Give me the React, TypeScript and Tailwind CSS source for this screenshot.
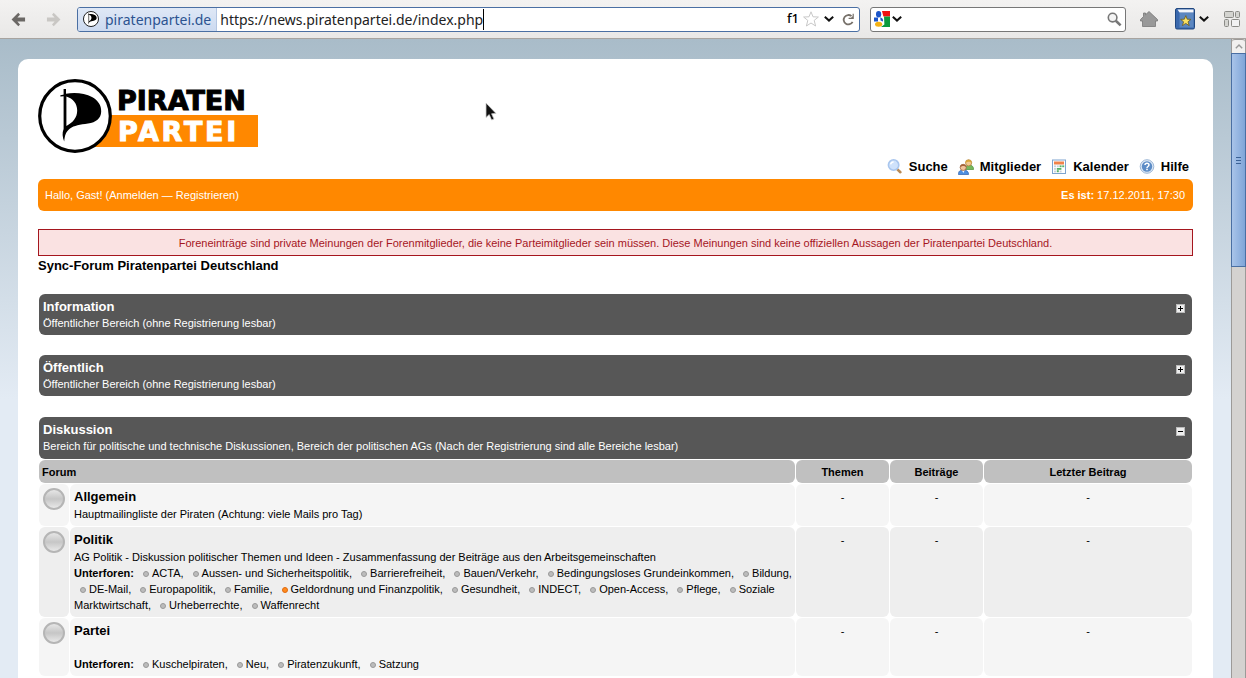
import React, { type ReactNode } from "react";

type Sub = { name: string; fresh?: boolean };
type Forum = { title: string; text: string; subs?: Sub[] };

const forums: Forum[] = [
  { title: "Allgemein", text: "Hauptmailingliste der Piraten (Achtung: viele Mails pro Tag)" },
  {
    title: "Politik",
    text: "AG Politik - Diskussion politischer Themen und Ideen - Zusammenfassung der Beiträge aus den Arbeitsgemeinschaften",
    subs: [
      { name: "ACTA" },
      { name: "Aussen- und Sicherheitspolitik" },
      { name: "Barrierefreiheit" },
      { name: "Bauen/Verkehr" },
      { name: "Bedingungsloses Grundeinkommen" },
      { name: "Bildung" },
      { name: "DE-Mail" },
      { name: "Europapolitik" },
      { name: "Familie" },
      { name: "Geldordnung und Finanzpolitik", fresh: true },
      { name: "Gesundheit" },
      { name: "INDECT" },
      { name: "Open-Access" },
      { name: "Pflege" },
      { name: "Soziale Marktwirtschaft" },
      { name: "Urheberrechte" },
      { name: "Waffenrecht" },
    ],
  },
  {
    title: "Partei",
    text: "\u00a0",
    subs: [{ name: "Kuschelpiraten" }, { name: "Neu" }, { name: "Piratenzukunft" }, { name: "Satzung" }],
  },
];

function Arrow({ className }: { className: string }) {
  return (
    <svg viewBox="0 0 16 16" className={className} aria-hidden="true">
      <path d="M7.8 .8 L.6 8 L7.8 15.2 L9.6 13.2 L6.8 10.2 H15 V5.8 H6.8 L9.6 2.8 Z" fill="currentColor" />
    </svg>
  );
}

function Chevron() {
  return (
    <svg viewBox="0 0 10 6" className="h-[6px] w-[10px]" aria-hidden="true">
      <path d="M.8 .8 L5 4.6 L9.2 .8" fill="none" stroke="#111" strokeWidth="2" />
    </svg>
  );
}

function PirateMark({ className, ring }: { className: string; ring: number }) {
  return (
    <svg viewBox="0 0 74 74" className={className} aria-hidden="true">
      <circle cx="37" cy="37" r={36.8 - ring / 2} fill="#fff" stroke="#000" strokeWidth={ring} />
      <FlagShape />
    </svg>
  );
}

function FlagShape() {
  return (
    <g>
      <path
        fillRule="evenodd"
        d="M25.6 10 H28 V14.8 C36 13.2 47 14 54 18 C60 21.5 63.4 26 63.2 32.5 C63 39.5 58 43.4 50 44.6 C42 45.8 36 46.6 32 49.5 C28 52.5 26.8 56 26.2 62.5 C24.4 58 24 54 25.6 50 Z M28.4 17.5 V47 C35 43.5 39.2 38.5 39.2 31.5 C39.2 24.5 35 19.5 28.4 17.5 Z"
      />
      <path d="M22.4 16.2 L29 15 V17 L22.4 17.4 Z" />
    </g>
  );
}

function Logo() {
  return (
    <svg viewBox="0 0 220 74" className="h-[74px] w-[220px]" role="img" aria-label="Piratenpartei">
      <rect x="50" y="36" width="170" height="32" fill="#ff8800" />
      <circle cx="37" cy="37" r="35.3" fill="#fff" stroke="#000" strokeWidth="3.2" />
      <FlagShape />
      <text x="79" y="31" className="font-['DejaVu_Sans'] text-[27px] font-bold" fill="#000" stroke="#000">
        PIRATEN
      </text>
      <text x="80" y="62" className="font-['DejaVu_Sans'] text-[27px] font-bold tracking-widest" fill="#fff" stroke="#fff">
        PARTEI
      </text>
    </svg>
  );
}

function Toolbar() {
  return (
    <header className="flex h-[39px] shrink-0 items-center border-b border-[#a8a4a0] bg-linear-to-b from-[#f3f2f1] to-[#e9e8e7] pr-[6px] pl-[11px] font-['Noto_Sans',sans-serif] text-[14px] text-[#222]">
      <button aria-label="Zurück" className="mr-5 text-[#6b6865]">
        <Arrow className="h-[15px] w-[15px]" />
      </button>
      <button aria-label="Vor" className="mr-4 text-[#c9c7c4]">
        <Arrow className="h-[15px] w-[15px] rotate-180" />
      </button>
      <div className="flex h-[25px] min-w-0 flex-1 items-center overflow-hidden rounded-[3px] border border-[#4a6fa3] bg-white">
        <button className="flex h-full items-center gap-[6px] border-r border-[#b4c6e2] bg-linear-to-b from-[#dfe8f6] to-[#ccdaf0] px-[5px] text-[#2c5390]">
          <PirateMark className="h-4 w-4" ring={4} />
          piratenpartei.de
        </button>
        <div className="flex min-w-0 flex-1 items-center">
          <input
            aria-label="Adresse"
            defaultValue="https://news.piratenpartei.de/index.php"
            className="field-sizing-content pl-[3px] text-[#222] outline-none"
          />
          <span className="h-[21px] w-px bg-black" />
        </div>
        <span className="mr-1 text-[13px] font-medium text-black">f1</span>
        <button aria-label="Lesezeichen setzen" className="mr-[5px]">
          <svg viewBox="0 0 16 16" className="h-4 w-4">
            <path d="M8 .8 L10 5.8 L15.4 6 L11.2 9.4 L12.6 15 L8 12 L3.4 15 L4.8 9.4 L.6 6 L6 5.8 Z" fill="#fff" stroke="#c8c8c8" />
          </svg>
        </button>
        <button aria-label="Verlauf anzeigen" className="mr-2">
          <Chevron />
        </button>
        <button aria-label="Neu laden" className="mr-1">
          <svg viewBox="0 0 13 13" className="h-[13px] w-[13px]">
            <path d="M9.5 3.2 A4.7 4.7 0 1 0 10.6 8.8" fill="none" stroke="#77716a" strokeWidth="1.8" />
            <path d="M11.8 .8 V6 H6.6 V4.8 H9 L10.6 3.2 V.8 Z" fill="#77716a" />
          </svg>
        </button>
      </div>
      <div className="ml-[10px] flex h-[25px] w-64 shrink-0 items-center rounded-[3px] border border-[#777] bg-white px-[3px]">
        <button aria-label="Suchmaschine wählen" className="flex items-center gap-[2px]">
          <svg viewBox="0 0 16 16" className="h-4 w-4" aria-hidden="true">
            <path d="M8 0 H16 V5.4 H9.4 Z" fill="#ee1111" />
            <path d="M10 5.4 H16 V16 H7 L10.4 13.6 Z" fill="#0a9a3c" />
            <path d="M0 6.5 H4 V10.5 H0 Z" fill="#1b55c9" />
            <ellipse cx="4.6" cy="3.2" rx="2.6" ry="3.2" fill="#1b55c9" />
            <path d="M6.2 6.2 C8.4 7 9.4 8.2 9 10.4 L6.6 9.6 Z" fill="#1b55c9" />
            <ellipse cx="4.6" cy="13.2" rx="3.6" ry="2.5" fill="#f4b214" />
          </svg>
          <Chevron />
        </button>
        <input aria-label="Suche im Web" className="min-w-0 flex-1 outline-none" />
        <button aria-label="Suchen">
          <svg viewBox="0 0 15 15" className="h-[15px] w-[15px]">
            <circle cx="5.6" cy="5.6" r="4.3" fill="#f4f4f4" stroke="#777" strokeWidth="1.6" />
            <path d="M8.8 8.8 L13.6 13.4" stroke="#777" strokeWidth="2.6" />
          </svg>
        </button>
      </div>
      <button aria-label="Startseite" className="ml-[14px]">
        <svg viewBox="0 0 18 16" className="h-4 w-[18px]">
          <path d="M9 .5 L17.5 8.5 V10 H15.5 V15.5 H2.5 V10 H.5 V8.5 L3.5 5.6 V2 H5.5 V3.8 Z" fill="#999" stroke="#777" strokeWidth=".8" />
        </svg>
      </button>
      <button aria-label="Lesezeichen" className="ml-[17px] flex items-center gap-1">
        <svg viewBox="0 0 20 22" className="h-[22px] w-5" aria-hidden="true">
          <rect x=".5" y=".5" width="19" height="20.5" rx="1.5" fill="#3a68ad" stroke="#20477f" />
          <path d="M2.5 1.5 H18.5 V4.5 H4.5 Z" fill="#f4f6fa" />
          <rect x="4.5" y="5" width="14" height="14.5" fill="#5b86c0" />
          <path d="M10.8 7.6 L12.2 11.2 L16 11.4 L13 13.8 L14.2 17.6 L10.8 15.4 L7.4 17.6 L8.6 13.8 L5.6 11.4 L9.4 11.2 Z" fill="#fbe262" stroke="#6b5a1c" strokeWidth=".8" />
        </svg>
        <Chevron />
      </button>
      <button aria-label="Tab-Gruppen" className="ml-[15px]">
        <svg viewBox="0 0 16 16" className="h-4 w-4" stroke="#8a8a86" fill="#d4d4d0">
          <rect x=".5" y=".5" width="9" height="6" rx="1" />
          <rect x="11.5" y=".5" width="4" height="6" rx="1" />
          <rect x=".5" y="8.5" width="4" height="7" rx="1" />
          <rect x="7.5" y="8.5" width="8" height="7" rx="1" fill="#f2f2f2" />
        </svg>
      </button>
    </header>
  );
}

function ScrollBar() {
  return (
    <div className="flex w-[15px] shrink-0 flex-col border-x border-[#9c9a98] bg-[#d4d2d0]" aria-hidden="true">
      <div className="flex h-[14px] items-center justify-center rounded-t-[3px] border-t border-[#9c9a98] bg-[#f1f0ef]">
        <svg viewBox="0 0 8 5" className="h-[5px] w-2">
          <path d="M.8 4.2 L4 1 L7.2 4.2" fill="none" stroke="#999" strokeWidth="1.4" />
        </svg>
      </div>
      <div className="-mx-px flex h-[214px] flex-col items-center justify-center gap-[2px] border border-[#4a6fa3] bg-linear-to-r from-[#a9c4e9] to-[#7fa5d8]">
        <span className="h-px w-[5px] bg-[#3b6296]" />
        <span className="h-px w-[5px] bg-[#3b6296]" />
        <span className="h-px w-[5px] bg-[#3b6296]" />
      </div>
    </div>
  );
}

const searchIcon = (
  <svg viewBox="0 0 16 16" className="h-4 w-4" aria-hidden="true">
    <path d="M9.6 9.6 L13.4 13.2" stroke="#b98a55" strokeWidth="2.6" strokeLinecap="round" />
    <circle cx="6.6" cy="6" r="5.2" fill="#cfe2fb" stroke="#a9c6ee" strokeWidth="1.6" />
    <path d="M3.6 5.4 A3 3 0 0 1 6.6 3" fill="none" stroke="#fff" strokeWidth="1.4" />
  </svg>
);

const membersIcon = (
  <svg viewBox="0 0 16 16" className="h-4 w-4" aria-hidden="true">
    <path d="M7 10.5 C7 7.5 9 6 11 6 C14 6 15.6 7.6 15.6 10.5 Z" fill="#76b85c" stroke="#4d8f3a" strokeWidth=".7" />
    <circle cx="10.6" cy="3.8" r="3.1" fill="#f0c890" stroke="#a9792f" strokeWidth=".7" />
    <path d="M7.4 4.2 C7.4 -.4 13.8 -.4 13.8 4.2 C12.4 2.2 9.2 2.2 7.4 4.2 Z" fill="#d9a437" />
    <path d="M.4 15.5 C.4 12 2.4 11 5 11 C8.6 11 10.6 12.4 10.6 15.5 Z" fill="#4f8fe0" stroke="#2e62ae" strokeWidth=".7" />
    <path d="M3.8 11 L5.3 14 L6.8 11 Z" fill="#fff" />
    <circle cx="5.2" cy="8.4" r="3.1" fill="#f1c39b" stroke="#8f5a34" strokeWidth=".7" />
    <path d="M2 8.6 C2 4 8.4 4 8.4 8.6 C7 6.6 3.8 6.6 2 8.6 Z" fill="#a5613a" />
  </svg>
);

const calendarIcon = (
  <svg viewBox="0 0 16 16" className="h-4 w-4" aria-hidden="true">
    <rect x="1.5" y="1" width="13" height="13.5" fill="#fff" stroke="#7ea4cf" />
    <rect x="3" y="2.5" width="10" height="3" fill="#f0824a" />
    <g fill="#c9d2dc">
      <rect x="3" y="6.4" width="2" height="1.8" />
      <rect x="5.8" y="6.4" width="2" height="1.8" />
      <rect x="3" y="9" width="2" height="1.8" />
      <rect x="3" y="11.6" width="2" height="1.8" />
      <rect x="8.6" y="11.6" width="2" height="1.8" />
    </g>
    <g fill="#58b26a">
      <rect x="8.6" y="6.4" width="2" height="1.8" />
      <rect x="11.2" y="6.4" width="2" height="1.8" />
      <rect x="5.8" y="9" width="4.6" height="1.8" />
      <rect x="5.8" y="11.2" width="2" height="2" />
    </g>
  </svg>
);

const helpIcon = (
  <svg viewBox="0 0 16 16" className="h-4 w-4" aria-hidden="true">
    <circle cx="8" cy="7.5" r="6.8" fill="#dce8f6" stroke="#9db7d6" />
    <circle cx="8" cy="7.5" r="5.2" fill="#5c8cc6" />
    <path d="M6 6.1 C6 3.7 10 3.7 10 6.1 C10 7.5 8 7.5 8 8.9" fill="none" stroke="#fff" strokeWidth="1.5" />
    <rect x="7.2" y="9.7" width="1.6" height="1.5" fill="#fff" />
  </svg>
);

function NavLink({ icon, children }: { icon: ReactNode; children: ReactNode }) {
  return (
    <a href="#" className="flex items-center gap-[6px]">
      {icon}
      {children}
    </a>
  );
}

function CategoryHead({ title, text, open }: { title: string; text: string; open?: boolean }) {
  return (
    <tr className={open ? "h-[42px]" : "h-[41px]"}>
      <th colSpan={5} className="rounded-[6px] bg-[#575757] px-1 text-left align-top font-normal text-white">
        <div className="flex items-start justify-between pt-1">
          <div>
            <a href="#" className="block text-[13px] leading-[17px] font-bold">
              {title}
            </a>
            <div className="leading-4">{text}</div>
          </div>
          <button
            aria-label={open ? "Einklappen" : "Ausklappen"}
            className="mt-[6px] mr-[3px] flex h-[9px] w-[9px] items-center justify-center border border-[#bbb] bg-[#eee]"
          >
            <svg viewBox="0 0 5 5" className="h-[5px] w-[5px] shrink-0" fill="#000" aria-hidden="true">
              <rect y="2" width="5" height="1" />
              {!open && <rect x="2" width="1" height="5" />}
            </svg>
          </button>
        </div>
      </th>
    </tr>
  );
}

function Columns() {
  return (
    <colgroup>
      <col className="w-[30px]" />
      <col />
      <col className="w-[93px]" />
      <col className="w-[93px]" />
      <col className="w-[208px]" />
    </colgroup>
  );
}

function SubForums({ subs }: { subs: Sub[] }) {
  return (
    <div>
      <strong>Unterforen:</strong>{" "}
      {subs.map((s, i) => {
        const [first, ...rest] = s.name.split(" ");
        const tail = rest.length > 0 ? " " + rest.join(" ") : "";
        const comma = i < subs.length - 1 ? "," : "";
        return (
          <React.Fragment key={s.name}>
            <a href="#">
              <span className="whitespace-nowrap">
                <span
                  className={
                    s.fresh
                      ? "mr-[3px] ml-[6px] inline-block h-[6px] w-[6px] rounded-full border border-[#e06a10] bg-[#ff8a1c]"
                      : "mr-[3px] ml-[6px] inline-block h-[6px] w-[6px] rounded-full border border-[#999] bg-[#bcbcbc]"
                  }
                />
                {first}
                {tail ? "" : comma}
              </span>
              {tail}
            </a>
            {tail ? comma : ""}{" "}
          </React.Fragment>
        );
      })}
    </div>
  );
}

function ForumRow({ forum, shaded }: { forum: Forum; shaded: boolean }) {
  const cell = shaded ? "rounded-[6px] bg-[#eeeeee] py-1 pl-1 align-top" : "rounded-[6px] bg-[#f5f5f5] py-1 pl-1 align-top";
  return (
    <tr>
      <td className={cell}>
        <div className="h-[22px] w-[22px] rounded-full border-2 border-[#b5b5b5] bg-linear-to-b from-[#e6e6e6] via-[#c6c6c6] to-[#e8e8e8]" />
      </td>
      <td className={cell}>
        <a href="#" className="block text-[13px] leading-[18px] font-bold">
          {forum.title}
        </a>
        <div>{forum.text}</div>
        {forum.subs && <SubForums subs={forum.subs} />}
      </td>
      {[0, 1, 2].map((n) => (
        <td key={n} className={cell}>
          <div className="pr-1 text-center leading-[18px]">-</div>
        </td>
      ))}
    </tr>
  );
}

export default function App() {
  return (
    <div className="relative flex h-screen flex-col overflow-hidden">
      <Toolbar />
      <div className="flex min-h-0 flex-1">
        <main className="min-w-0 flex-1 overflow-hidden bg-[#e3ebf4] bg-[linear-gradient(to_bottom,#a9bcc9,#e3ebf4_360px)] px-[18px] pt-5 font-['Liberation_Sans',sans-serif] text-[11px] leading-4 text-black">
          <div className="rounded-t-[10px] bg-white p-5">
            <Logo />
            <nav className="mt-[5px] mr-1 flex h-[18px] items-center justify-end gap-[10px] text-[13px] font-bold">
              <NavLink icon={searchIcon}>Suche</NavLink>
              <NavLink icon={membersIcon}>Mitglieder</NavLink>
              <NavLink icon={calendarIcon}>Kalender</NavLink>
              <NavLink icon={helpIcon}>Hilfe</NavLink>
            </nav>
            <div className="mt-[3px] flex h-8 items-center justify-between rounded-[6px] bg-[#ff8800] pr-2 pl-[7px] text-white">
              <div>
                Hallo, Gast! (<a href="#">Anmelden</a> — <a href="#">Registrieren</a>)
              </div>
              <div>
                <strong>Es ist:</strong> 17.12.2011, 17:30
              </div>
            </div>
            <div className="mt-[18px] flex h-[27px] items-center justify-center border border-[#a5161e] bg-[#fae2e2] text-[#a5161e]">
              Foreneinträge sind private Meinungen der Forenmitglieder, die keine Parteimitglieder sein müssen. Diese Meinungen sind keine
              offiziellen Aussagen der Piratenpartei Deutschland.
            </div>
            <h1 className="mt-px text-[13px] leading-[18px] font-bold">Sync-Forum Piratenpartei Deutschland</h1>
            <table className="mt-[18px] w-full table-fixed border-separate border-spacing-[1px]">
              <Columns />
              <tbody>
                <CategoryHead title="Information" text="Öffentlicher Bereich (ohne Registrierung lesbar)" />
              </tbody>
            </table>
            <table className="mt-[18px] w-full table-fixed border-separate border-spacing-[1px]">
              <Columns />
              <tbody>
                <CategoryHead title="Öffentlich" text="Öffentlicher Bereich (ohne Registrierung lesbar)" />
              </tbody>
            </table>
            <table className="mt-[19px] w-full table-fixed border-separate border-spacing-[1px]">
              <Columns />
              <thead>
                <CategoryHead
                  open
                  title="Diskussion"
                  text="Bereich für politische und technische Diskussionen, Bereich der politischen AGs (Nach der Registrierung sind alle Bereiche lesbar)"
                />
                <tr className="h-[23px] text-center">
                  <th colSpan={2} className="rounded-[6px] bg-[#c0c0c0] px-[3px] text-left">
                    Forum
                  </th>
                  <th className="rounded-[6px] bg-[#c0c0c0]">Themen</th>
                  <th className="rounded-[6px] bg-[#c0c0c0]">Beiträge</th>
                  <th className="rounded-[6px] bg-[#c0c0c0]">Letzter Beitrag</th>
                </tr>
              </thead>
              <tbody>
                {forums.map((f, i) => (
                  <ForumRow key={f.title} forum={f} shaded={i % 2 === 1} />
                ))}
              </tbody>
            </table>
          </div>
        </main>
        <ScrollBar />
      </div>
      <svg viewBox="0 0 12 20" className="pointer-events-none absolute top-[102px] left-[485px] h-5 w-3" aria-hidden="true">
        <path d="M1 1 V15.5 L4.2 12.6 L6.6 18 L9 17 L6.6 11.8 L11 11.4 Z" fill="#111" stroke="#ccc" strokeWidth=".8" />
      </svg>
    </div>
  );
}
